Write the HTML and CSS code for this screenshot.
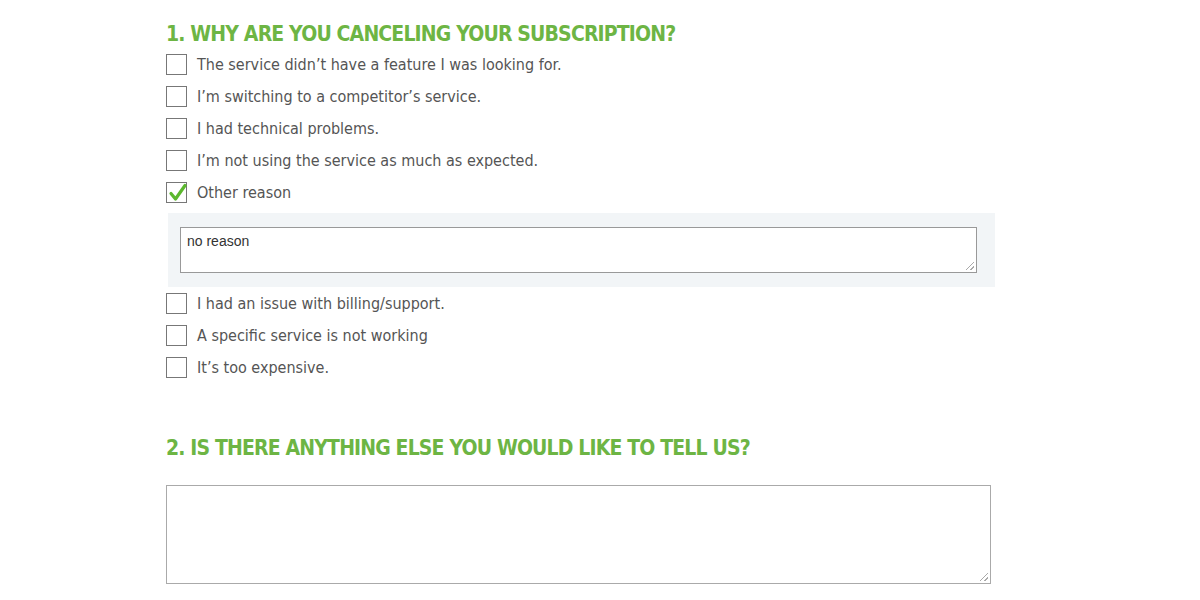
FILE: index.html
```html
<!DOCTYPE html>
<html>
<head>
<meta charset="utf-8">
<link rel="stylesheet" href="styles.css">
</head>
<body>
<div class="form">
  <h2 class="q q1">1. WHY ARE YOU CANCELING YOUR SUBSCRIPTION?</h2>
  <ul class="options">
    <li class="opt"><span class="box"></span><span class="label">The service didn’t have a feature I was looking for.</span></li>
    <li class="opt"><span class="box"></span><span class="label">I’m switching to a competitor’s service.</span></li>
    <li class="opt"><span class="box"></span><span class="label">I had technical problems.</span></li>
    <li class="opt"><span class="box"></span><span class="label">I’m not using the service as much as expected.</span></li>
    <li class="opt"><span class="box checked"><svg viewBox="0 0 22 22" width="22" height="22"><path d="M4 11.5 L8.5 17 L18 3.5" fill="none" stroke="#5cb82e" stroke-width="3.2" stroke-linecap="round" stroke-linejoin="round"/></svg></span><span class="label">Other reason</span></li>
  </ul>
  <div class="other">
    <div class="ta small"><span class="ta-text">no reason</span><span class="grip"></span></div>
  </div>
  <ul class="options">
    <li class="opt"><span class="box"></span><span class="label">I had an issue with billing/support.</span></li>
    <li class="opt"><span class="box"></span><span class="label">A specific service is not working</span></li>
    <li class="opt"><span class="box"></span><span class="label">It’s too expensive.</span></li>
  </ul>
  <h2 class="q q2">2. IS THERE ANYTHING ELSE YOU WOULD LIKE TO TELL US?</h2>
  <div class="ta big"><span class="grip"></span></div>
</div>
</body>
</html>
```
FILE: styles.css
```css
html, body { margin: 0; padding: 0; background: #fff; }
body { font-family: "DejaVu Sans Condensed", "Open Sans", sans-serif; color: #555; }
.form { margin-left: 166px; width: 829px; padding-top: 21px; }
.q { margin: 0; color: #6db544; font-weight: bold; font-size: 21px; line-height: 26px; letter-spacing: -0.85px; }
.q2 { margin-top: 52px; }
.options { list-style: none; margin: 0; padding: 0; }
.q1 + .options { margin-top: 1px; }
.opt { display: flex; align-items: center; height: 32px; }
.box { width: 19px; height: 19px; border: 1.5px solid #777; box-sizing: content-box; flex: none; position: relative; background: #fff; }
.box svg { position: absolute; left: 0; top: -1px; }
.label { margin-left: 10px; font-size: 16px; color: #555; }
.other { background: #f2f5f7; margin: 5px 0 0 2px; padding: 14px 18px 14px 12px; }
.ta { background: #fff; border: 1px solid #999; position: relative; box-sizing: border-box; }
.ta.small { height: 46px; }
.ta.big { height: 99px; width: 825px; margin-top: 24px; border-color: #aaa; }
.ta-text { position: absolute; left: 6px; top: 5px; font-family: "Liberation Sans", Arial, sans-serif; font-size: 14px; color: #333; }
.grip { position: absolute; right: 2px; bottom: 2px; width: 8px; height: 8px;
  background: linear-gradient(135deg, transparent 45%, #aaa 45%, #aaa 55%, transparent 55%, transparent 72%, #aaa 72%, #aaa 82%, transparent 82%); }
```
